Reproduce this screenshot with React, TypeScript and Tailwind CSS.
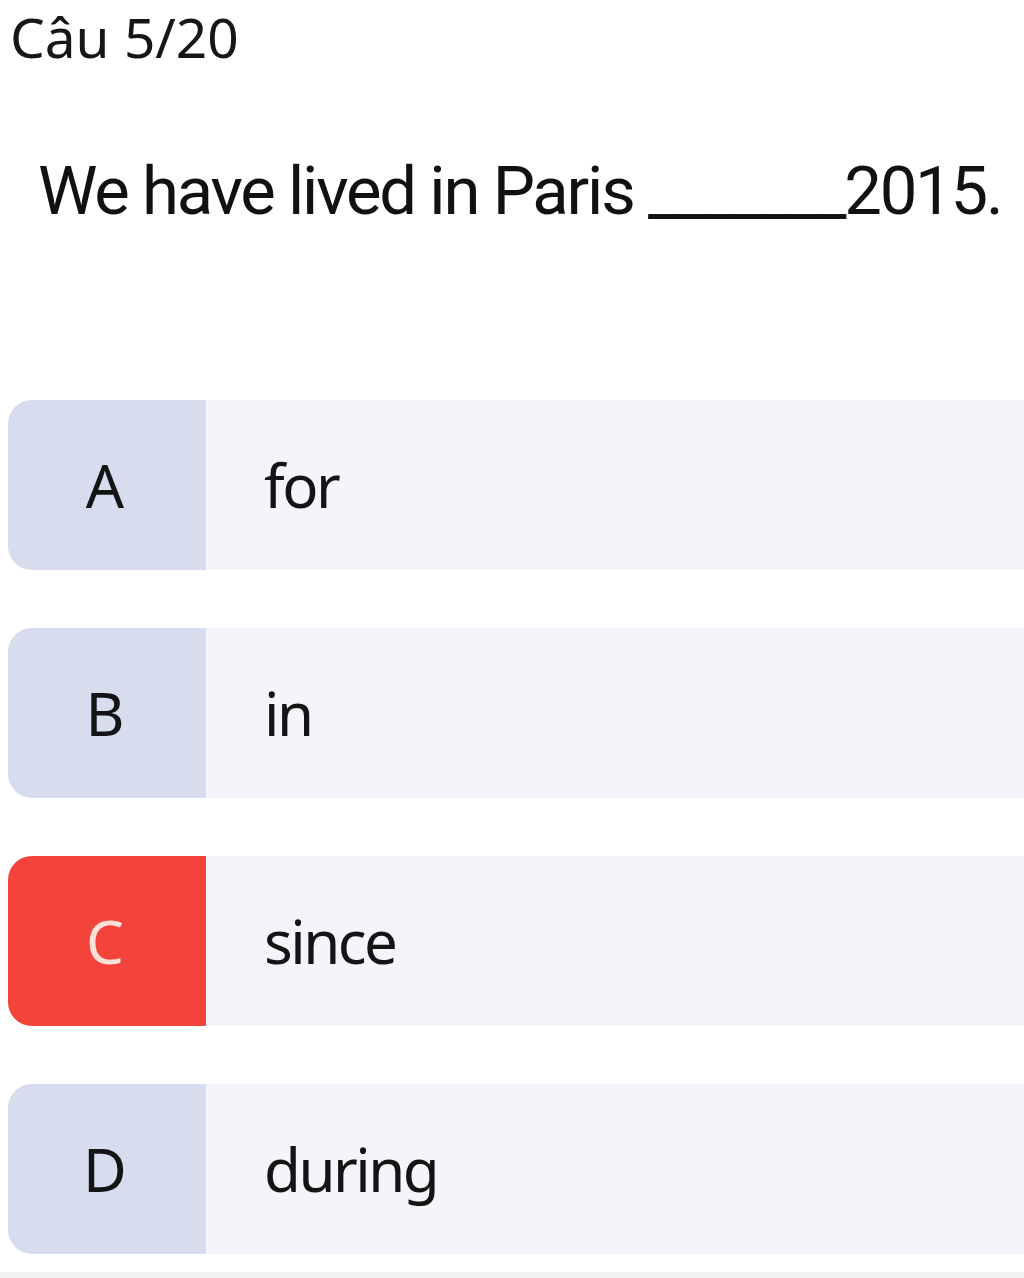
import React from 'react'

const OPTIONS = [
  { key: 'A', text: 'for', selected: false },
  { key: 'B', text: 'in', selected: false },
  { key: 'C', text: 'since', selected: true },
  { key: 'D', text: 'during', selected: false },
]

function OptionRow({ opt }: { opt: (typeof OPTIONS)[number] }) {
  return (
    <div className="flex h-[170px] w-full">
      <div
        className={[
          'flex w-[198px] shrink-0 items-center justify-center rounded-l-[24px] pr-[4px] text-[60px]',
          opt.selected ? 'bg-[#f4433a] text-[#fde0d8]' : 'bg-[#d8dcef] text-[#141414]',
        ].join(' ')}
      >
        {opt.key}
      </div>
      <div className="flex flex-1 items-center bg-[#f4f5fa] pl-[58px] text-[60px] tracking-[-2.5px] text-[#141414]">
        {opt.text}
      </div>
    </div>
  )
}

export default function App() {
  return (
    <div
      className="flex h-[1278px] w-[1024px] flex-col overflow-hidden bg-white"
      style={{ fontFamily: '"Noto Sans", sans-serif' }}
    >
      <div className="pl-[10px] pt-[1px] text-[55px] leading-[72px] text-[#161616]">Câu 5/20</div>

      <div
        className="mt-[78px] whitespace-nowrap pl-[38px] text-[67px] leading-[80px] tracking-[-2.2px] text-[#111]"
        style={{ fontFamily: 'Roboto, sans-serif' }}
      >
        We have lived in Paris _______2015.
      </div>

      <div className="mt-[169px] flex flex-col gap-[58px] pl-[8px]">
        {OPTIONS.map((opt) => (
          <OptionRow key={opt.key} opt={opt} />
        ))}
      </div>

      <div className="mt-auto h-[6px] bg-[#f2f2f2]" />
    </div>
  )
}
